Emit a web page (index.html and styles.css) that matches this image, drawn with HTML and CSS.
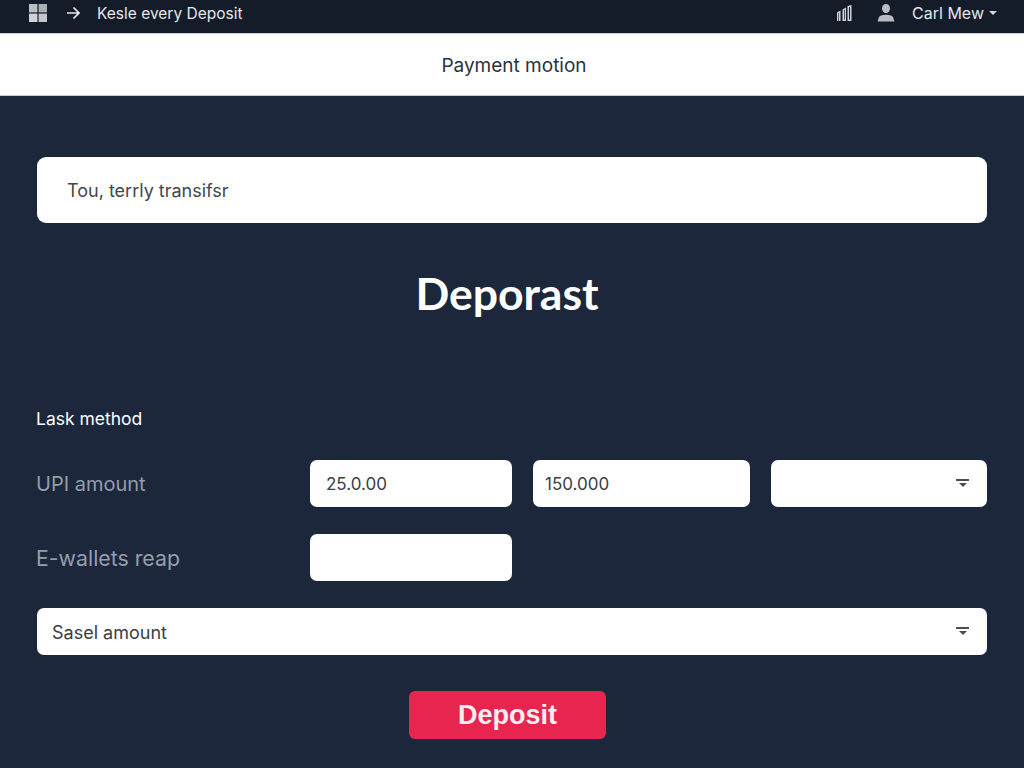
FILE: index.html
```html
<!DOCTYPE html>
<html lang="en">
<head>
<meta charset="utf-8">
<title>Deposit</title>
<link rel="stylesheet" href="styles.css">
</head>
<body>
<header class="topbar">
  <div class="topbar-group">
    <svg class="icon-grid" width="18" height="18" viewBox="0 0 18 18"><rect x="0" y="0" width="8.4" height="8.4" fill="#b9bec5"/><rect x="9.6" y="0" width="8.4" height="8.4" fill="#a9afb7"/><rect x="0" y="9.6" width="8.4" height="8.4" fill="#cfd3d8"/><rect x="9.6" y="9.6" width="8.4" height="8.4" fill="#c2c7cd"/></svg>
    <svg class="icon-arrow" width="14" height="14" viewBox="0 0 14 14"><path d="M1 7H12.5M7.5 1.5L13 7L7.5 12.5" fill="none" stroke="#e6e9ed" stroke-width="1.7"/></svg>
    <span class="crumb">Kesle every Deposit</span>
  </div>
  <div class="topbar-group">
    <svg class="icon-chart" width="16" height="18" viewBox="0 0 16 18"><path d="M1 8.5L4.5 6.5V17H3V8.8L2.4 9.1V17H1ZM6.5 5.5L10 3.5V17H6.5ZM8 6.2V15.5H8.7V5.6ZM11.5 2L15.5 1V17H11.5ZM13 3.2V15.5H14V3Z" fill="#d0d4d8"/></svg>
    <svg class="icon-user" width="18" height="18" viewBox="0 0 18 18"><ellipse cx="9" cy="4.6" rx="4" ry="4.6" fill="#b8bcc2"/><path d="M0.5 17.5L1.8 13.5C2.5 11.6 5 10.8 9 10.8S15.5 11.6 16.2 13.5L17.5 17.5Z" fill="#b8bcc2"/></svg>
    <span class="user-name">Carl Mew</span>
    <span class="caret"></span>
  </div>
</header>
<div class="subbar">Payment motion</div>
<main class="content">
  <div class="notice">Tou, terrly transifsr</div>
  <h1 class="heading">Deporast</h1>
  <div class="section-label">Lask method</div>
  <form class="form-grid">
    <div class="row-label">UPI amount</div>
    <div class="field">25.0.00</div>
    <div class="field field-tight">150.000</div>
    <div class="field field-select"><span class="filter"></span></div>
    <div class="row-label row-label-wide">E-wallets reap</div>
    <div class="field"></div>
    <div class="field field-wide field-select"><span class="wide-text">Sasel amount</span><span class="filter"></span></div>
  </form>
  <div class="actions"><button class="deposit" type="button">Deposit</button></div>
</main>
</body>
</html>
```
FILE: styles.css
```css
* { box-sizing: border-box; }
html, body { margin: 0; height: 100%; }
body {
  background: #1c273c;
  font-family: Inter, "Liberation Sans", sans-serif;
  overflow: hidden;
}
.topbar {
  height: 34px;
  background: #141c2a;
  border-bottom: 1px solid #c9ccd2;
  display: flex;
  justify-content: space-between;
  align-items: center;
  padding: 0 27px 7px 29px;
}
.topbar-group { display: flex; align-items: center; }
.icon-arrow { margin-left: 19px; }
.crumb { margin-left: 17px; color: #e4e7ea; font-size: 15.5px; }
.icon-user { margin-left: 25px; }
.user-name { margin-left: 17px; color: #e4e7ea; font-size: 16px; }
.caret {
  margin-left: 5px;
  width: 0;
  height: 0;
  border-left: 4.5px solid transparent;
  border-right: 4.5px solid transparent;
  border-top: 4.5px solid #d5d8dc;
}
.subbar {
  height: 62px;
  background: #fff;
  border-bottom: 1px solid #c9ccd2;
  color: #2b3240;
  font-size: 19px;
  display: flex;
  align-items: center;
  justify-content: center;
  padding: 2px 0 0 4px;
}
.content { padding: 61px 37px 0; }
.notice {
  height: 66px;
  background: #fff;
  border-radius: 9px;
  color: #43474e;
  font-size: 18px;
  display: flex;
  align-items: center;
  padding: 0 30px;
}
.heading {
  margin: 44px 0 0;
  padding-right: 10px;
  height: 52px;
  line-height: 52px;
  text-align: center;
  color: #fff;
  font-family: Lato, Inter, sans-serif;
  font-size: 44.5px;
  font-weight: 700;
}
.section-label {
  margin: 89px 0 0 -1px;
  height: 22px;
  line-height: 22px;
  color: #fff;
  font-size: 17.5px;
}
.form-grid {
  margin-top: 30px;
  display: grid;
  grid-template-columns: 252px 202px 217px 216px;
  grid-auto-rows: 47px;
  column-gap: 21px;
  row-gap: 27px;
}
.row-label {
  display: flex;
  align-items: center;
  margin-left: -1px;
  color: #959dad;
  font-size: 20px;
}
.row-label-wide { font-size: 21.3px; }
.field {
  background: #fff;
  border-radius: 7px;
  color: #3a3e45;
  font-size: 17px;
  display: flex;
  align-items: center;
  padding: 1px 16px 0;
}
.field-tight { padding-left: 12px; }
.field-select { justify-content: flex-end; }
.field-wide {
  grid-column: 1 / -1;
  justify-content: space-between;
}
.wide-text { color: #3a3e45; font-size: 18px; margin-left: -1px; }
.filter {
  width: 13px;
  height: 9px;
  margin: 0 2px 2px 0;
  border-top: 2px solid #4a4e55;
  position: relative;
}
.filter::after {
  content: "";
  position: absolute;
  left: 2.5px;
  top: 2px;
  border-left: 4px solid transparent;
  border-right: 4px solid transparent;
  border-top: 4.5px solid #4a4e55;
}
.actions { margin-top: 36px; display: flex; padding-left: 372px; }
.deposit {
  width: 197px;
  height: 48px;
  background: #e8254e;
  border: 0;
  border-radius: 6px;
  color: #fbeef1;
  font-family: "Liberation Sans", Inter, sans-serif;
  font-size: 27px;
  font-weight: 700;
}
```
